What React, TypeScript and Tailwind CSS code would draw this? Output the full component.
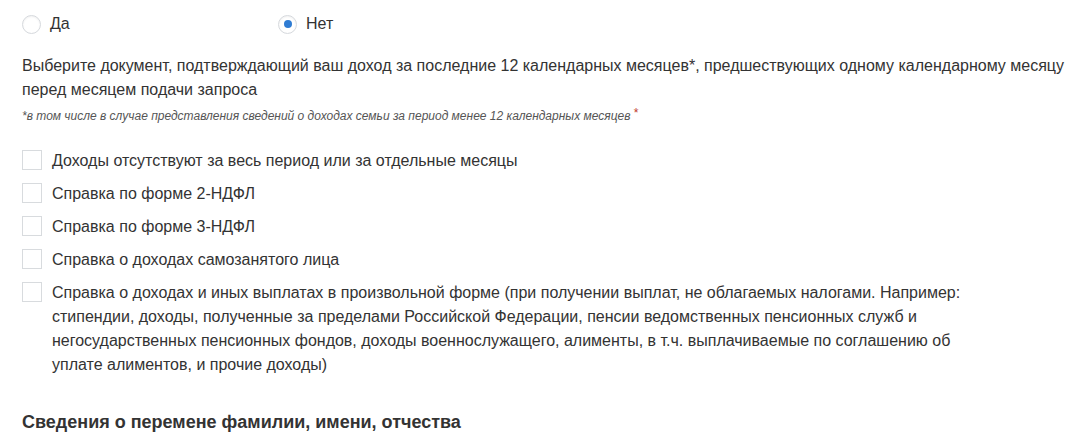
const options = [
  "Доходы отсутствуют за весь период или за отдельные месяцы",
  "Справка по форме 2-НДФЛ",
  "Справка по форме 3-НДФЛ",
  "Справка о доходах самозанятого лица",
  "Справка о доходах и иных выплатах в произвольной форме (при получении выплат, не облагаемых налогами. Например: стипендии, доходы, полученные за пределами Российской Федерации, пенсии ведомственных пенсионных служб и негосударственных пенсионных фондов, доходы военнослужащего, алименты, в т.ч. выплачиваемые по соглашению об уплате алиментов, и прочие доходы)",
];

const Radio = ({ checked, label }: { checked?: boolean; label: string }) => (
  <label className="flex items-center gap-[9px]">
    <span className="flex h-[19px] w-[19px] items-center justify-center rounded-full border border-[#d6d9dd] bg-white shadow-[inset_0_1px_2px_rgba(0,0,0,0.06)]">
      {checked && <span className="h-[8px] w-[8px] rounded-full bg-[#2f7cd3]" />}
    </span>
    <span>{label}</span>
  </label>
);

const App = () => {
  return (
    <div className="min-h-[446px] bg-white pl-[22px] pr-[6px] pt-[12px] text-[16px] leading-[24px] text-[#333] [font-family:'Liberation_Sans',Arial,sans-serif]">
      {/* Yes / No */}
      <div className="flex">
        <div className="w-[256px]">
          <Radio label="Да" />
        </div>
        <Radio checked label="Нет" />
      </div>

      {/* Document prompt */}
      <p className="mt-[18px]">
        Выберите документ, подтверждающий ваш доход за последние 12 календарных месяцев*, предшествующих одному
        календарному месяцу перед месяцем подачи запроса
      </p>
      <p className="mt-[6px] text-[12px] italic leading-[16px] text-[#555]">
        *в том числе в случае представления сведений о доходах семьи за период менее 12 календарных месяцев{" "}
        <span className="relative -top-[3px] not-italic text-[#c0392b]">*</span>
      </p>

      {/* Options */}
      <div className="mt-[25px] flex flex-col gap-[9px]">
        {options.map((text) => (
          <label key={text} className="flex items-start gap-[10px]">
            <span className="mt-[1px] h-[20px] w-[20px] shrink-0 border border-[#d8dbde] bg-white" />
            <span className="max-w-[915px]">{text}</span>
          </label>
        ))}
      </div>

      <h3 className="mt-[33px] text-[18px] font-bold leading-[24px] text-[#333]">
        Сведения о перемене фамилии, имени, отчества
      </h3>
    </div>
  );
};

export default App;
